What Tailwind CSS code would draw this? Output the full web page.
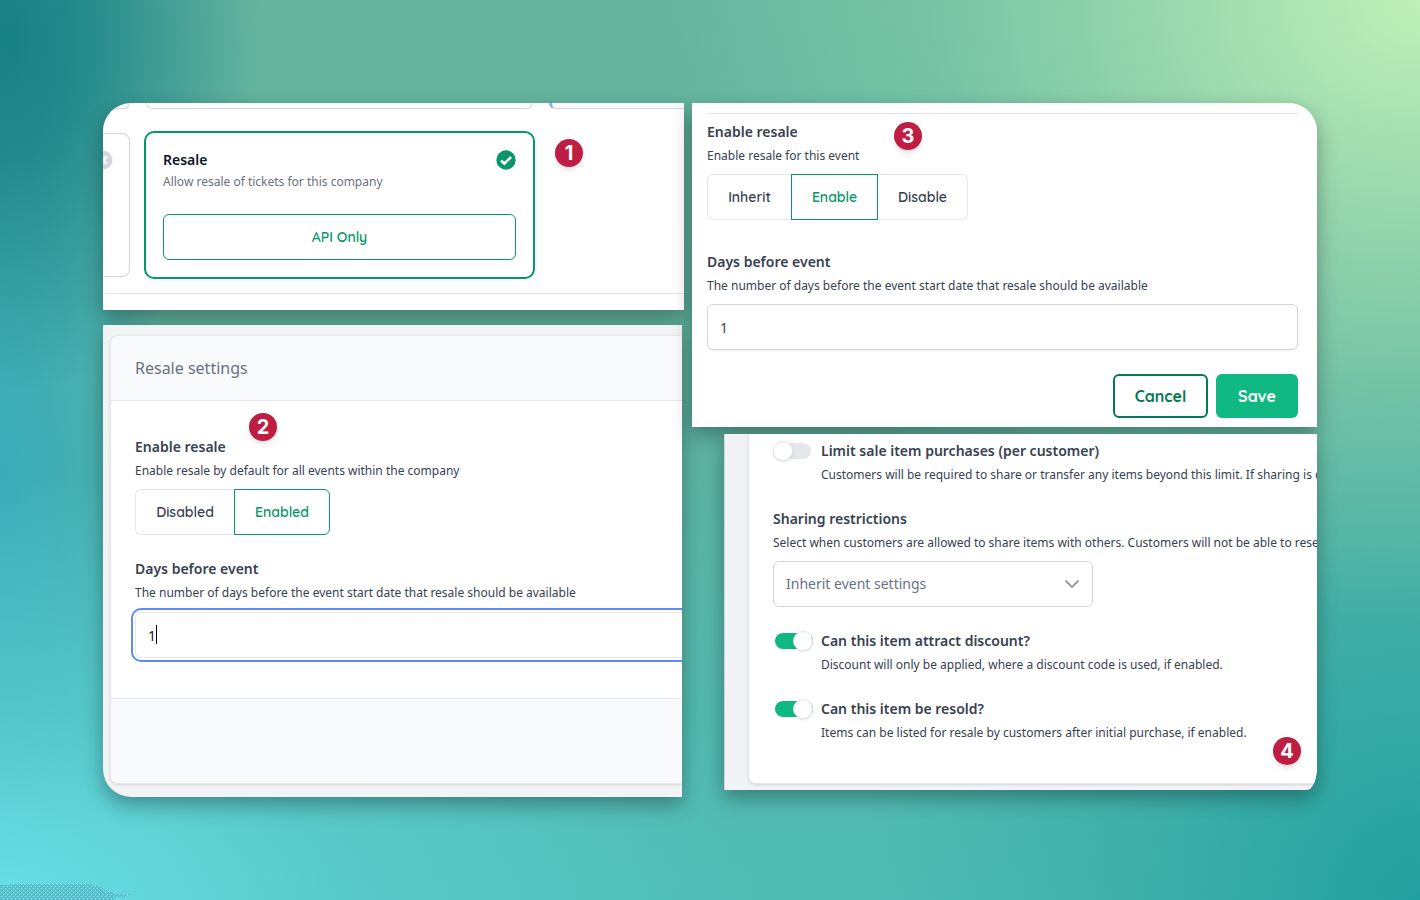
<!DOCTYPE html>
<html lang="en">
<head>
    <meta charset="UTF-8">
    <meta name="viewport" content="width=device-width, initial-scale=1.0">
    <title>Resale settings</title>
    <script src="https://cdn.jsdelivr.net/npm/@tailwindcss/browser@4"></script>
</head>
<body class="relative min-h-screen overflow-x-hidden p-[103px] font-['Noto_Sans',sans-serif] text-[#374151] bg-[#55b5a5] bg-[radial-gradient(ellipse_260px_360px_at_0%_4%,#178085_0%,#1c8589dd_35%,#2f959500_100%),radial-gradient(ellipse_760px_620px_at_100%_0%,#c0f0b8_0%,#a3dfb1cc_35%,#84cfac88_65%,#78c7a800_100%),radial-gradient(ellipse_760px_420px_at_0%_100%,#68dfe6_0%,#5cd0d3aa_45%,#50bab000_100%),radial-gradient(ellipse_170px_560px_at_0%_55%,#3aadba_0%,#3aadbaaa_50%,#3aadba00_100%),radial-gradient(ellipse_560px_560px_at_100%_100%,#22a09f_0%,#35a9a4aa_50%,#48b2a800_100%),linear-gradient(180deg,#66b59e_0%,#5eb29e_45%,#51b8ae_80%,#50bdb5_100%)]">

    <!-- Dithered corner -->
    <svg class="absolute bottom-0 left-0" width="132" height="17" viewBox="0 0 132 17" aria-hidden="true">
        <defs>
            <pattern id="dither" width="4" height="4" patternUnits="userSpaceOnUse">
                <rect width="4" height="4" fill="#55c3cd"/>
                <rect x="1" y="1" width="1" height="1" fill="#a9d4ec"/>
                <rect x="3" y="3" width="1" height="1" fill="#a9d4ec"/>
            </pattern>
        </defs>
        <path d="M0 2h11V1h81v2h8l5 4v2h9v2h16v1h-4v2h-12v3H0z" fill="url(#dither)"/>
    </svg>

    <main class="grid grid-cols-[581fr_625fr] items-start gap-2">
        <div class="min-w-0 space-y-[15px]">

            <!-- 1: company features -->
            <section class="relative h-[207px] rounded-tl-[28px] bg-white shadow-[0_8px_20px_rgba(0,0,0,0.32)]">
                <div class="h-full overflow-hidden rounded-tl-[28px]">
                    <div class="flex h-[6px] gap-4">
                        <div class="w-[27px] shrink-0 rounded-br-lg border-r border-b border-gray-300"></div>
                        <div class="w-[387px] shrink-0 rounded-b-lg border border-t-0 border-gray-300"></div>
                        <div class="grow rounded-bl-lg border-b border-l-3 border-b-gray-300 border-l-[#8ba9f5] bg-gray-50"></div>
                    </div>
                    <div class="mt-[22px] flex items-center gap-[14px]">
                        <div class="flex h-[144px] w-[27px] shrink-0 items-start rounded-r-lg border border-l-0 border-gray-300 pt-4">
                            <svg class="-ml-[10px] size-5 shrink-0" viewBox="0 0 20 20" aria-hidden="true">
                                <circle cx="10" cy="10" r="9.5" fill="#d4d6de"/>
                                <path d="M7 7l6 6M13 7l-6 6" stroke="#fff" stroke-width="2.5" stroke-linecap="round"/>
                            </svg>
                        </div>
                        <article class="w-[391px] shrink-0 rounded-[10px] border-2 border-[#059669] p-[17px]">
                            <div class="flex items-center justify-between">
                                <h2 class="text-sm leading-5 font-semibold text-gray-900">Resale</h2>
                                <svg class="size-5" viewBox="0 0 20 20" aria-hidden="true">
                                    <circle cx="10" cy="10" r="9.7" fill="#059669"/>
                                    <path d="M5 10.5l3.3 3.2 6.7-6.7" fill="none" stroke="#fff" stroke-width="2.6"/>
                                </svg>
                            </div>
                            <p class="mt-[3px] text-xs leading-[18px] text-gray-500">Allow resale of tickets for this company</p>
                            <button type="button" class="mt-[23px] h-[46px] w-full rounded-md border border-[#059669] font-['Quicksand','Lato',sans-serif] text-sm font-semibold text-[#059669]">API Only</button>
                        </article>
                    </div>
                    <hr class="mt-[14px] border-gray-200">
                </div>
                <span class="absolute top-[36px] left-[452px] flex size-7 items-center justify-center rounded-full bg-[#be1e41] font-['Inter',sans-serif] text-xl leading-none font-bold text-white shadow-md">1</span>
            </section>

            <!-- 2: company settings -->
            <section class="relative mr-[2px] h-[472px] rounded-bl-[28px] bg-[#f2f3f5] shadow-[0_8px_20px_rgba(0,0,0,0.32)]">
                <div class="h-full overflow-hidden rounded-bl-[28px] pt-[10px] pl-[7px]">
                    <div class="overflow-hidden rounded-l-lg border border-r-0 border-gray-200 bg-white shadow-sm">
                        <h2 class="border-b border-gray-200 bg-gray-50 px-6 py-5 text-base leading-6 text-gray-500">Resale settings</h2>
                        <div class="pt-9 pb-10 pl-6">
                            <h3 class="text-sm leading-5 font-semibold">Enable resale</h3>
                            <p class="mt-[5px] text-xs leading-[18px]">Enable resale by default for all events within the company</p>
                            <div class="mt-[9px] flex h-[46px] font-['Quicksand','Lato',sans-serif] text-sm font-semibold" role="group" aria-label="Enable resale">
                                <button type="button" aria-pressed="false" class="w-[99px] rounded-l-md border border-r-0 border-gray-200">Disabled</button>
                                <button type="button" aria-pressed="true" class="w-[96px] rounded-r-md border border-[#059669] text-[#059669]">Enabled</button>
                            </div>
                            <label for="company-days" class="mt-6 block text-sm leading-5 font-semibold">Days before event</label>
                            <p class="mt-[5px] text-xs leading-[18px]">The number of days before the event start date that resale should be available</p>
                            <div class="relative mt-[10px] -mr-2">
                                <input id="company-days" type="text" value="1" class="block h-[46px] w-full rounded-md border border-gray-200 bg-white px-3 text-sm text-gray-900 outline-2 outline-offset-2 outline-[#5d8bf4]">
                                <span class="absolute top-[13px] left-[21px] h-[19px] w-px bg-black"></span>
                            </div>
                        </div>
                        <div class="h-[85px] border-t border-gray-200 bg-gray-50"></div>
                    </div>
                </div>
                <span class="absolute top-[88px] left-[146px] flex size-7 items-center justify-center rounded-full bg-[#be1e41] font-['Inter',sans-serif] text-xl leading-none font-bold text-white shadow-md">2</span>
            </section>
        </div>

        <div class="min-w-0 space-y-[7px]">

            <!-- 3: event settings -->
            <section class="relative rounded-tr-[28px] bg-white pt-[10px] pr-[19px] pb-[9px] pl-[15px] shadow-[0_8px_20px_rgba(0,0,0,0.32)]">
                <hr class="border-gray-200">
                <h3 class="mt-2 text-sm leading-5 font-semibold">Enable resale</h3>
                <p class="mt-[5px] text-xs leading-[18px]">Enable resale for this event</p>
                <div class="mt-[9px] flex h-[46px] font-['Quicksand','Lato',sans-serif] text-sm font-semibold" role="group" aria-label="Enable resale">
                    <button type="button" aria-pressed="false" class="w-[84px] rounded-l-md border border-r-0 border-gray-200">Inherit</button>
                    <button type="button" aria-pressed="true" class="w-[87px] border border-[#059669] text-[#059669]">Enable</button>
                    <button type="button" aria-pressed="false" class="w-[90px] rounded-r-md border border-l-0 border-gray-200">Disable</button>
                </div>
                <label for="event-days" class="mt-8 block text-sm leading-5 font-semibold">Days before event</label>
                <p class="mt-[5px] text-xs leading-[18px]">The number of days before the event start date that resale should be available</p>
                <input id="event-days" type="text" value="1" class="mt-[9px] block h-[46px] w-full rounded-md border border-gray-300 bg-white px-3 text-sm shadow-xs">
                <div class="mt-6 flex h-11 justify-end gap-2 font-['Quicksand','Lato',sans-serif] text-base font-bold">
                    <button type="button" class="w-[95px] rounded-md border-2 border-[#047857] text-[#047857]">Cancel</button>
                    <button type="button" class="w-[82px] rounded-md bg-[#10b981] text-white">Save</button>
                </div>
                <span class="absolute top-[19px] left-[202px] flex size-7 items-center justify-center rounded-full bg-[#be1e41] font-['Inter',sans-serif] text-xl leading-none font-bold text-white shadow-md">3</span>
            </section>

            <!-- 4: item settings -->
            <section class="relative ml-8 h-[356px] rounded-br-[10px_24px] bg-[#f2f3f6] shadow-[0_8px_20px_rgba(0,0,0,0.32)]">
                <div class="h-full overflow-hidden rounded-br-[10px_24px] border-l border-gray-300 pl-[23px]">
                    <div class="rounded-bl-lg border-b border-l border-gray-200 bg-white pt-[7px] pb-[41px] pl-6 whitespace-nowrap shadow-sm">
                        <div class="flex">
                            <input id="limit" type="checkbox" class="mt-[2px] mr-[10px] flex h-4 w-[38px] shrink-0 appearance-none items-center rounded-full bg-gray-200 before:block before:size-5 before:shrink-0 before:rounded-full before:border before:border-gray-200 before:bg-white before:shadow-sm">
                            <div>
                                <label for="limit" class="block text-sm leading-5 font-semibold">Limit sale item purchases (per customer)</label>
                                <p class="mt-[5px] text-xs leading-[18px]">Customers will be required to share or transfer any items beyond this limit. If sharing is d</p>
                            </div>
                        </div>
                        <label for="sharing" class="mt-[25px] block text-sm leading-5 font-semibold">Sharing restrictions</label>
                        <p class="mt-[5px] text-xs leading-[18px]">Select when customers are allowed to share items with others. Customers will not be able to rese</p>
                        <div class="relative mt-[9px] w-80">
                            <select id="sharing" class="block h-[46px] w-full appearance-none rounded-md border border-gray-300 bg-white px-3 text-sm text-gray-500">
                                <option>Inherit event settings</option>
                            </select>
                            <svg class="pointer-events-none absolute top-[15px] right-[13px] size-4" viewBox="0 0 16 16" fill="none" stroke="#979ca3" stroke-width="1.8" stroke-linecap="round" stroke-linejoin="round" aria-hidden="true">
                                <path d="M2 5l6 6 6-6"/>
                            </svg>
                        </div>
                        <div class="mt-6 flex">
                            <input id="discount" type="checkbox" checked class="mt-[2px] mr-[8px] ml-[2px] flex h-4 w-[38px] shrink-0 appearance-none items-center justify-end rounded-full bg-[#10b981] before:block before:size-5 before:shrink-0 before:rounded-full before:border before:border-gray-200 before:bg-white before:shadow-sm">
                            <div>
                                <label for="discount" class="block text-sm leading-5 font-semibold">Can this item attract discount?</label>
                                <p class="mt-[5px] text-xs leading-[18px]">Discount will only be applied, where a discount code is used, if enabled.</p>
                            </div>
                        </div>
                        <div class="mt-[25px] flex">
                            <input id="resold" type="checkbox" checked class="mt-[2px] mr-[8px] ml-[2px] flex h-4 w-[38px] shrink-0 appearance-none items-center justify-end rounded-full bg-[#10b981] before:block before:size-5 before:shrink-0 before:rounded-full before:border before:border-gray-200 before:bg-white before:shadow-sm">
                            <div>
                                <label for="resold" class="block text-sm leading-5 font-semibold">Can this item be resold?</label>
                                <p class="mt-[5px] text-xs leading-[18px]">Items can be listed for resale by customers after initial purchase, if enabled.</p>
                            </div>
                        </div>
                    </div>
                </div>
                <span class="absolute right-4 bottom-[25px] flex size-7 items-center justify-center rounded-full bg-[#be1e41] font-['Inter',sans-serif] text-xl leading-none font-bold text-white shadow-md">4</span>
            </section>
        </div>
    </main>
</body>
</html>
